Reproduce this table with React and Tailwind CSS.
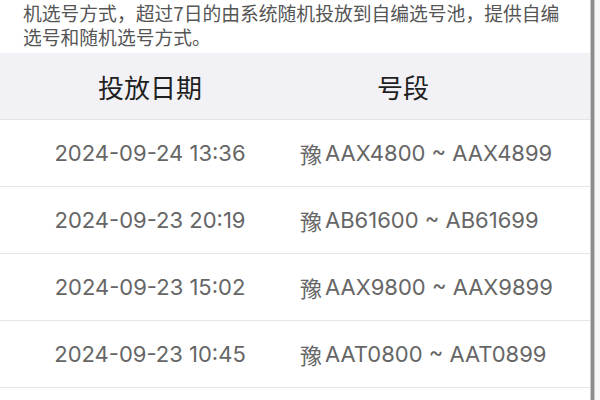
import React from "react";

const rows = [
  { date: "2024-09-24 13:36", range: "AAX4800 ~ AAX4899" },
  { date: "2024-09-23 20:19", range: "AB61600 ~ AB61699" },
  { date: "2024-09-23 15:02", range: "AAX9800 ~ AAX9899" },
  { date: "2024-09-23 10:45", range: "AAT0800 ~ AAT0899" },
];

const cjk = { fontFamily: '"Noto Sans CJK SC", sans-serif' };
const latin = { fontFamily: 'Inter, "Noto Sans CJK SC", sans-serif' };

export default function App() {
  return (
    <div className="grid grid-cols-[590px_1px_3px_1px_5px] w-[600px] h-[400px] overflow-hidden bg-white">
      <div className="flex flex-col min-w-0 overflow-hidden">
        {/* intro text */}
        <div
          className="h-[53px] shrink-0 pl-[23px] pt-[1px] text-[18.8px] leading-[24px] text-[#555] whitespace-nowrap"
          style={cjk}
        >
          <p>机选号方式，超过7日的由系统随机投放到自编选号池，提供自编</p>
          <p>选号和随机选号方式。</p>
        </div>

        {/* table header */}
        <div
          className="h-[67px] shrink-0 flex items-center bg-[#f2f2f6] border-b border-[#e4e4e8] text-[26px] text-[#1f1f1f]"
          style={cjk}
        >
          <div className="w-[300px] text-center">投放日期</div>
          <div className="w-[206px] text-center">号段</div>
        </div>

        {rows.map((r) => (
          <div
            key={r.date}
            className="h-[67px] shrink-0 flex items-center border-b border-[#e6e6e6] text-[22px] text-[#666] whitespace-nowrap"
            style={latin}
          >
            <div className="w-[300px] text-center">{r.date}</div>
            <div className="flex items-center">
              <span className="mr-[3px]" style={cjk}>
                豫
              </span>
              {r.range}
            </div>
          </div>
        ))}
      </div>
      <div className="bg-[#c8c8c8]" />
      <div className="bg-[#8c8c8c]" />
      <div className="bg-[#c8c8c8]" />
      <div className="bg-[#f6f6f6]" />
    </div>
  );
}
